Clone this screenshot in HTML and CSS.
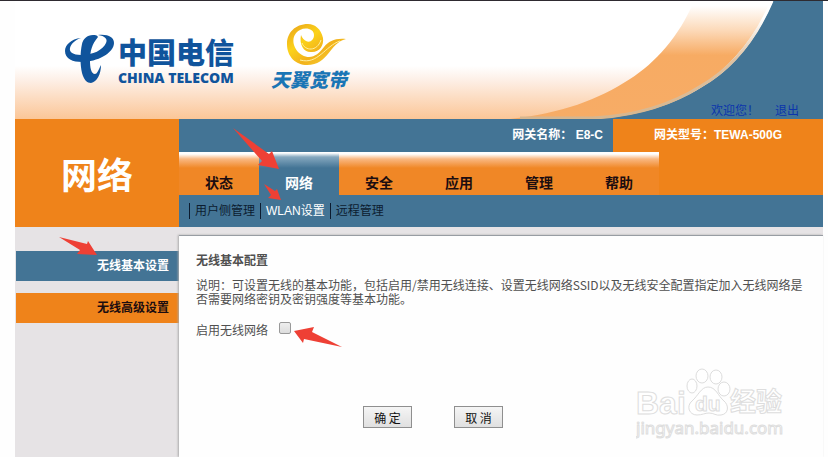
FILE: index.html
```
<!DOCTYPE html>
<html lang="zh-CN">

<head>
    <meta charset="UTF-8">
    <meta name="viewport" content="width=device-width, initial-scale=1.0">
    <title>网络 - 无线基本设置</title>
    <link rel="stylesheet" href="styles.css">
</head>

<body>
    <div class="page">
        <header class="header">
            <!-- orange and blue curve on the right side -->
            <svg class="swoosh" viewBox="0 0 323 118" width="323" height="118" aria-hidden="true">
                <defs>
                    <linearGradient id="band" x1="0" y1="0" x2="0" y2="1">
                        <stop offset="0.04" stop-color="#fff" />
                        <stop offset="0.25" stop-color="#fcd9b8" />
                        <stop offset="0.46" stop-color="#f7ab63" />
                        <stop offset="1" stop-color="#f7ac66" />
                    </linearGradient>
                    <linearGradient id="edge" x1="0" y1="0" x2="0" y2="1">
                        <stop offset="0.15" stop-color="#fff" />
                        <stop offset="0.5" stop-color="#dfc2a2" />
                        <stop offset="1" stop-color="#d6b68f" />
                    </linearGradient>
                </defs>
                <path fill="url(#band)" d="M194 0C179 36 155 62 130 78C98 99 62 112 10 118H110C190 108 240 66 272 0Z" />
                <path fill="#437495" d="M273 0C254 44 230 70 202 86C172 105 134 116 94 118H323V0Z" />
                <path fill="none" stroke="url(#edge)" stroke-width="3" d="M272 0C253 44 229 69 201 85C171 104 133 115 93 117H20" />
            </svg>

            <div class="telecom">
                <svg width="50" height="50" viewBox="0 0 50 50" aria-hidden="true">
                    <g fill="#10549c">
                        <path d="M16 4C6 5 0 11 0 17C0 25 8 28 17 28C32 28 49 19 49 9C49 3 43 0 33 1C40 2 43 5 41 9C38 16 28 21 16 21C8 21 4 18 5 14C6 10 10 6 16 4Z" />
                        <path d="M28 1C22 1 18 5 17 10C15 19 15 31 17 39C19 46 22 49 26 49C32 48 36 40 36 31C33 37 32 40 30 40C26 40 25 33 25 27C25 17 27 10 33 3C32 1 30 1 28 1Z" />
                    </g>
                </svg>
                <div class="telecom-text">
                    <span class="telecom-cn">中国电信</span>
                    <span class="telecom-en">CHINA TELECOM</span>
                </div>
            </div>

            <div class="tianyi">
                <svg width="60" height="42" viewBox="0 0 60 42" aria-hidden="true">
                    <defs>
                        <linearGradient id="gold" x1="0" y1="0" x2="1" y2="1">
                            <stop offset="0" stop-color="#e8a01c" />
                            <stop offset="0.35" stop-color="#fbd21a" />
                            <stop offset="0.6" stop-color="#f2b21b" />
                            <stop offset="1" stop-color="#f9d937" />
                        </linearGradient>
                    </defs>
                    <path fill="url(#gold)" d="M21 0C8 0 0 9 0 20C0 33 9 41 20 41C42 41 42 19 59 15C48 14 42 17 37 23C31 31 24 36 15 31C5 25 3 11 13 6C19 3 27 5 27 11C27 16 23 19 19 17C17 16 15 14 14 11C12 21 17 29 25 28C33 28 37 21 36 14C34 5 28 0 21 0Z" />
                    <path fill="none" stroke="#fff0a0" d="M15 19C18 27 30 28 34 16M13 36C31 41 38 22 53 17" />
                </svg>
                <span class="tianyi-text">天翼宽带</span>
            </div>

            <div class="user">
                <span>欢迎您！</span>
                <a href="#">退出</a>
            </div>
        </header>

        <div class="top">
            <h1 class="section-name">网络</h1>
            <div class="top-right">
                <div class="info">
                    <span class="info-name">网关名称： E8-C</span>
                    <span class="info-model">网关型号：TEWA-500G</span>
                </div>
                <nav class="tabs">
                    <a href="#" class="tab">状态</a>
                    <a href="#" class="tab active">网络</a>
                    <a href="#" class="tab">安全</a>
                    <a href="#" class="tab">应用</a>
                    <a href="#" class="tab">管理</a>
                    <a href="#" class="tab">帮助</a>
                </nav>
                <nav class="subnav">
                    <a href="#">用户侧管理</a>
                    <a href="#" class="current">WLAN设置</a>
                    <a href="#">远程管理</a>
                </nav>
            </div>
        </div>

        <div class="body">
            <aside class="sidebar">
                <a href="#" class="side-link active">无线基本设置</a>
                <a href="#" class="side-link">无线高级设置</a>
            </aside>

            <main class="content">
                <h2>无线基本配置</h2>
                <p>说明：可设置无线的基本功能，包括启用/禁用无线连接、设置无线网络SSID以及无线安全配置指定加入无线网络是否需要网络密钥及密钥强度等基本功能。</p>
                <form>
                    <div class="field">
                        <label for="wlan">启用无线网络</label>
                        <input type="checkbox" id="wlan">
                    </div>
                    <div class="buttons">
                        <button type="button">确 定</button>
                        <button type="button">取 消</button>
                    </div>
                </form>
            </main>
        </div>
    </div>

    <!-- red arrows pointing at the steps -->
    <svg class="arrows" width="360" height="360" viewBox="0 0 360 360" aria-hidden="true">
        <path d="M233 128L269 154L272 151L279 169L258 165L262 161Z" />
        <path d="M264 184L275 191L277 189L281 200L268 198L271 195Z" />
        <path d="M59 237L87 244L88 241L97 255L77 254L80 250Z" />
        <path d="M294 331L314 327L312 332L342 347L304 339L303 343Z" />
    </svg>

    <svg class="watermark" width="150" height="76" viewBox="0 0 150 76" aria-hidden="true">
        <text x="0" y="47" class="wm-big">Bai</text>
        <ellipse cx="56" cy="19" rx="5" ry="7" />
        <ellipse cx="66" cy="9" rx="6" ry="7" />
        <ellipse cx="80" cy="10" rx="6" ry="7" />
        <ellipse cx="88" cy="22" rx="6" ry="7" />
        <path d="M72 20C65 20 62 29 56 34C50 39 53 48 61 48C66 48 69 46 73 46C78 46 80 49 85 48C93 47 93 38 88 34C82 29 80 20 72 20Z" />
        <text x="59" y="44" class="wm-du">du</text>
        <text x="94" y="44" class="wm-cn">经验</text>
        <text x="0" y="67" class="wm-url">jingyan.baidu.com</text>
    </svg>
</body>

</html>
```

FILE: styles.css
```
* {
    box-sizing: border-box;
}

body {
    margin: 0;
    position: relative;
    overflow-x: hidden;
    font-family: "Liberation Sans", "Noto Sans CJK SC", sans-serif;
    font-size: 12px;
    background: #fefefe;
    border-top: 1px solid #2e2a30;
}

a {
    color: inherit;
    text-decoration: none;
}

.page {
    display: flex;
    flex-direction: column;
    min-height: calc(100vh - 1px);
    margin: 0 5px 0 15px;
}

/* header */
.header {
    position: relative;
    display: flex;
    align-items: flex-start;
    height: 118px;
    padding-left: 50px;
    background: linear-gradient(#fff 55%, #fdeee4 68%, #fbc697);
}

.swoosh {
    position: absolute;
    top: 0;
    right: 0;
}

.telecom {
    display: flex;
    gap: 3px;
    width: 172px;
    margin-top: 33px;
    color: #10549c;
    white-space: nowrap;
}

.telecom-text {
    display: flex;
    flex-direction: column;
}

.telecom-cn {
    font-family: "Noto Sans CJK SC", sans-serif;
    font-size: 29px;
    font-weight: 900;
    line-height: 34px;
}

.telecom-en {
    font-family: "Open Sans", sans-serif;
    font-size: 14px;
    font-weight: 800;
    line-height: 20px;
}

.tianyi {
    display: flex;
    flex-direction: column;
    align-items: flex-end;
    margin: 23px 0 0 34px;
}

.tianyi-text {
    color: #1a75b5;
    font-family: "Noto Sans CJK SC", sans-serif;
    font-size: 19px;
    font-style: italic;
    font-weight: 900;
    line-height: 26px;
}

.user {
    position: relative;
    display: flex;
    gap: 16px;
    align-self: flex-end;
    margin: 0 24px 0 auto;
    color: #0b35ac;
    line-height: 16px;
}

/* gateway info and navigation */
.top {
    display: flex;
    background: #437495;
}

.section-name {
    flex: none;
    display: flex;
    align-items: center;
    justify-content: center;
    width: 164px;
    margin: 0;
    color: #fff;
    background: #ef831a;
    font-size: 36px;
}

.top-right {
    flex: 1;
}

.info {
    display: flex;
    color: #fff;
    font-weight: bold;
    line-height: 33px;
}

.info-name {
    flex: 1;
    padding-right: 10px;
    text-align: right;
}

.info-model {
    width: 210px;
    background: #ef831a;
    text-align: center;
}

.tabs {
    display: flex;
    background: #ef831a;
}

.tab {
    width: 80px;
    height: 43px;
    padding-top: 20px;
    color: #1c0d10;
    background: linear-gradient(#fff 2px, #f9b882 7px, #f08726 16px);
    font-size: 14px;
    font-weight: bold;
    line-height: 22px;
    text-align: center;
}

.tab.active {
    color: #fff;
    background: linear-gradient(#fff 1px, #86a8bf 5px, #437495 16px);
}

.subnav {
    display: flex;
    align-items: center;
    height: 32px;
    padding-left: 10px;
    color: #0c1c30;
}

.subnav a {
    padding: 0 5px;
    border-left: 1px solid #0c1c30;
    line-height: 16px;
}

.subnav .current {
    color: #fff;
}

/* sidebar and content */
.body {
    flex: 1;
    display: flex;
    padding-top: 8px;
    background: #e6e3e5;
}

.sidebar {
    flex: none;
    display: flex;
    flex-direction: column;
    gap: 12px;
    width: 164px;
    padding: 16px 0 0 1px;
}

.side-link {
    padding-right: 10px;
    color: #1c0d10;
    background: #ef831a;
    font-weight: bold;
    line-height: 30px;
    text-align: right;
}

.side-link.active {
    color: #fff;
    background: #437495;
}

.content {
    flex: 1;
    padding: 16px 10px 16px 17px;
    background: #fefefe;
    border-top: 1px solid #989da3;
    box-shadow: -1px 0 2px #aaa;
    color: #505050;
    font-family: "Noto Sans CJK SC", sans-serif;
}

.content h2 {
    margin: 0 0 10px;
    font-size: 12px;
    line-height: 16px;
}

.content p {
    margin: 0 0 14px;
    line-height: 14px;
}

.field {
    display: flex;
    align-items: center;
    gap: 11px;
    line-height: 20px;
}

.field input {
    appearance: none;
    width: 12px;
    height: 12px;
    margin: 0 0 4px;
    border: 1px solid #999;
    border-radius: 2px;
    background: linear-gradient(#eee, #ddd);
}

.buttons {
    display: flex;
    gap: 42px;
    padding: 66px 0 0 167px;
}

.buttons button {
    width: 49px;
    height: 22px;
    padding: 0;
    border: 1px solid #8f8f8f;
    color: #111;
    background: linear-gradient(#f5f5f5, #e0e0e0);
    font-family: "Noto Sans CJK SC", sans-serif;
    font-size: 12px;
}

/* drawn over the page */
.arrows {
    position: absolute;
    top: -1px;
    left: 0;
    fill: #ee4035;
    pointer-events: none;
}

.watermark {
    position: absolute;
    top: 366px;
    right: 42px;
    fill: #fff;
    stroke: #ddd;
    stroke-width: 1px;
    pointer-events: none;
}

.wm-big {
    font: bold 32px "Liberation Sans", sans-serif;
}

.wm-du {
    font: bold 21px "Liberation Sans", sans-serif;
}

.wm-cn {
    font: bold 26px "Noto Sans CJK SC", sans-serif;
}

.wm-url {
    font: 17px "Noto Sans", sans-serif;
}
```
